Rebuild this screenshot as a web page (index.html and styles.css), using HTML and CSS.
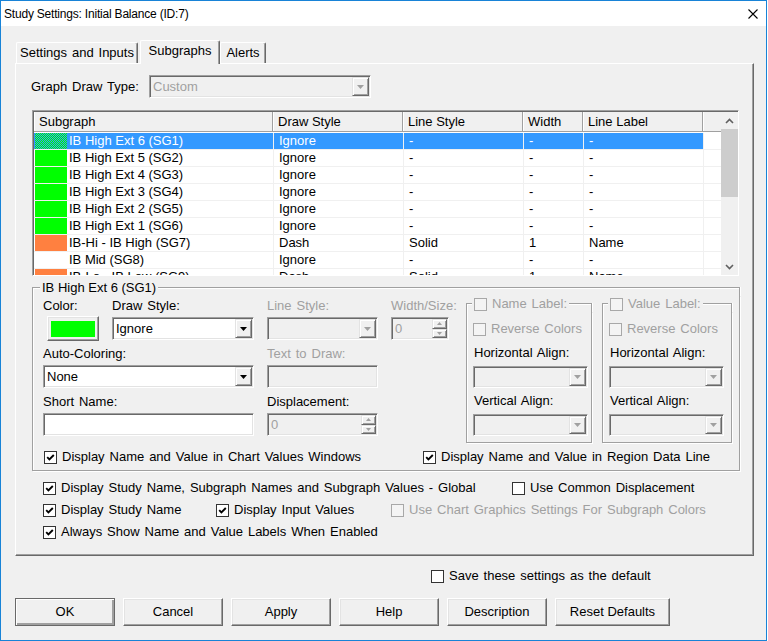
FILE: index.html
```html
<!DOCTYPE html>
<html>
<head>
<meta charset="utf-8">
<title>Study Settings</title>
<link rel="stylesheet" href="styles.css">
</head>
<body>
<div class="window">
  <div class="titlebar">
    <span class="title">Study Settings: Initial Balance (ID:7)</span>
    <svg class="close" width="10" height="10" viewBox="0 0 10 10"><path d="M0.5 0.5L9.5 9.5M9.5 0.5L0.5 9.5" stroke="#000" stroke-width="1.1" fill="none"/></svg>
  </div>

  <div class="tabs">
    <div class="tab t1">Settings and Inputs</div>
    <div class="tab t2 active">Subgraphs</div>
    <div class="tab t3">Alerts</div>
  </div>

  <div class="panel">
    <div class="gdt">
      <span class="gdt-label">Graph Draw Type:</span>
      <div class="field combo dis w222"><span class="val">Custom</span><span class="drop"><svg width="7" height="4" viewBox="0 0 7 4"><path d="M0 0h7L3.5 4z"/></svg></span></div>
    </div>

    <div class="list">
      <div class="lv">
        <div class="lv-head">
          <div class="hc">Subgraph</div>
          <div class="hc">Draw Style</div>
          <div class="hc">Line Style</div>
          <div class="hc">Width</div>
          <div class="hc">Line Label</div>
          <div class="hc hlast"></div>
        </div>
        <div class="lv-rows">
          <div class="row sel"><div class="c c1"><span class="sw dither"></span>IB High Ext 6 (SG1)</div><div class="c">Ignore</div><div class="c">-</div><div class="c">-</div><div class="c">-</div><div class="c e"></div></div>
          <div class="row"><div class="c c1"><span class="sw green"></span>IB High Ext 5 (SG2)</div><div class="c">Ignore</div><div class="c">-</div><div class="c">-</div><div class="c">-</div><div class="c e"></div></div>
          <div class="row"><div class="c c1"><span class="sw green"></span>IB High Ext 4 (SG3)</div><div class="c">Ignore</div><div class="c">-</div><div class="c">-</div><div class="c">-</div><div class="c e"></div></div>
          <div class="row"><div class="c c1"><span class="sw green"></span>IB High Ext 3 (SG4)</div><div class="c">Ignore</div><div class="c">-</div><div class="c">-</div><div class="c">-</div><div class="c e"></div></div>
          <div class="row"><div class="c c1"><span class="sw green"></span>IB High Ext 2 (SG5)</div><div class="c">Ignore</div><div class="c">-</div><div class="c">-</div><div class="c">-</div><div class="c e"></div></div>
          <div class="row"><div class="c c1"><span class="sw green"></span>IB High Ext 1 (SG6)</div><div class="c">Ignore</div><div class="c">-</div><div class="c">-</div><div class="c">-</div><div class="c e"></div></div>
          <div class="row"><div class="c c1"><span class="sw orange"></span>IB-Hi - IB High (SG7)</div><div class="c">Dash</div><div class="c">Solid</div><div class="c">1</div><div class="c">Name</div><div class="c e"></div></div>
          <div class="row"><div class="c c1"><span class="sw none"></span>IB Mid (SG8)</div><div class="c">Ignore</div><div class="c">-</div><div class="c">-</div><div class="c">-</div><div class="c e"></div></div>
          <div class="row"><div class="c c1"><span class="sw orange"></span>IB-Lo - IB Low (SG9)</div><div class="c">Dash</div><div class="c">Solid</div><div class="c">1</div><div class="c">Name</div><div class="c e"></div></div>
        </div>
      </div>
      <div class="vscroll">
        <div class="sb-btn"><svg width="9" height="6" viewBox="0 0 9 6"><path d="M1 5L4.5 1.5L8 5" stroke="#606060" stroke-width="1.6" fill="none"/></svg></div>
        <div class="sb-thumb"></div>
        <div class="sb-track"></div>
        <div class="sb-btn"><svg width="9" height="6" viewBox="0 0 9 6"><path d="M1 1L4.5 4.5L8 1" stroke="#606060" stroke-width="1.6" fill="none"/></svg></div>
      </div>
    </div>

    <div class="gb main-gb">
      <div class="gb-head"><span class="gb-title">IB High Ext 6 (SG1)</span></div>
      <div class="gb-body main-body">
        <div class="sub-top">
          <div class="fields">
            <span class="lbl g-a1">Color:</span>
            <div class="colorbtn g-a2"><span class="colorsw"></span></div>

            <span class="lbl g-b1">Draw Style:</span>
            <div class="field combo ctl g-b2 w142"><span class="val">Ignore</span><span class="drop"><svg width="7" height="4" viewBox="0 0 7 4"><path d="M0 0h7L3.5 4z"/></svg></span></div>

            <span class="lbl dis-t g-c1">Line Style:</span>
            <div class="field combo dis ctl g-c2 w111"><span class="val"></span><span class="drop"><svg width="7" height="4" viewBox="0 0 7 4"><path d="M0 0h7L3.5 4z"/></svg></span></div>

            <span class="lbl dis-t g-d1">Width/Size:</span>
            <div class="field spin dis ctl g-d2 w58"><span class="val">0</span><span class="spbtns"><span class="spb"><svg width="5" height="3" viewBox="0 0 5 3"><path d="M0 3h5L2.5 0z"/></svg></span><span class="spb"><svg width="5" height="3" viewBox="0 0 5 3"><path d="M0 0h5L2.5 3z"/></svg></span></span></div>

            <span class="lbl g-ab3">Auto-Coloring:</span>
            <div class="field combo ctl g-ab4 w211"><span class="val">None</span><span class="drop"><svg width="7" height="4" viewBox="0 0 7 4"><path d="M0 0h7L3.5 4z"/></svg></span></div>

            <span class="lbl dis-t g-c3">Text to Draw:</span>
            <div class="field dis ctl g-c4 w111"></div>

            <span class="lbl g-ab5">Short Name:</span>
            <div class="field ctl g-ab6 w211"></div>

            <span class="lbl g-c5">Displacement:</span>
            <div class="field spin dis ctl g-c6 w111"><span class="val">0</span><span class="spbtns"><span class="spb"><svg width="5" height="3" viewBox="0 0 5 3"><path d="M0 3h5L2.5 0z"/></svg></span><span class="spb"><svg width="5" height="3" viewBox="0 0 5 3"><path d="M0 0h5L2.5 3z"/></svg></span></span></div>
          </div>

          <div class="gb sub name-box">
            <div class="gb-head sub-head"><span class="gb-title dis-t"><span class="cb dis"></span>Name Label:</span></div>
            <div class="gb-body sub-body">
              <div class="cbrow dis-t"><span class="cb dis"></span>Reverse Colors</div>
              <div class="sublbl">Horizontal Align:</div>
              <div class="field combo dis w115 subctl"><span class="val"></span><span class="drop"><svg width="7" height="4" viewBox="0 0 7 4"><path d="M0 0h7L3.5 4z"/></svg></span></div>
              <div class="sublbl">Vertical Align:</div>
              <div class="field combo dis w115 subctl"><span class="val"></span><span class="drop"><svg width="7" height="4" viewBox="0 0 7 4"><path d="M0 0h7L3.5 4z"/></svg></span></div>
            </div>
          </div>

          <div class="gb sub value-box">
            <div class="gb-head sub-head"><span class="gb-title dis-t"><span class="cb dis"></span>Value Label:</span></div>
            <div class="gb-body sub-body">
              <div class="cbrow dis-t"><span class="cb dis"></span>Reverse Colors</div>
              <div class="sublbl">Horizontal Align:</div>
              <div class="field combo dis w115 subctl"><span class="val"></span><span class="drop"><svg width="7" height="4" viewBox="0 0 7 4"><path d="M0 0h7L3.5 4z"/></svg></span></div>
              <div class="sublbl">Vertical Align:</div>
              <div class="field combo dis w115 subctl"><span class="val"></span><span class="drop"><svg width="7" height="4" viewBox="0 0 7 4"><path d="M0 0h7L3.5 4z"/></svg></span></div>
            </div>
          </div>
        </div>

        <div class="gb-checks">
          <div class="cbrow w379"><span class="cb"><svg width="11" height="11" viewBox="0 0 11 11"><path d="M2.2 5.2L4.4 7.4L8.8 3" stroke="#000" stroke-width="1.9" fill="none"/></svg></span>Display Name and Value in Chart Values Windows</div>
          <div class="cbrow"><span class="cb"><svg width="11" height="11" viewBox="0 0 11 11"><path d="M2.2 5.2L4.4 7.4L8.8 3" stroke="#000" stroke-width="1.9" fill="none"/></svg></span>Display Name and Value in Region Data Line</div>
        </div>
      </div>
    </div>

    <div class="pchecks">
      <div class="prow">
        <div class="cbrow w469"><span class="cb"><svg width="11" height="11" viewBox="0 0 11 11"><path d="M2.2 5.2L4.4 7.4L8.8 3" stroke="#000" stroke-width="1.9" fill="none"/></svg></span>Display Study Name, Subgraph Names and Subgraph Values - Global</div>
        <div class="cbrow"><span class="cb"></span>Use Common Displacement</div>
      </div>
      <div class="prow">
        <div class="cbrow w173"><span class="cb"><svg width="11" height="11" viewBox="0 0 11 11"><path d="M2.2 5.2L4.4 7.4L8.8 3" stroke="#000" stroke-width="1.9" fill="none"/></svg></span>Display Study Name</div>
        <div class="cbrow w175"><span class="cb"><svg width="11" height="11" viewBox="0 0 11 11"><path d="M2.2 5.2L4.4 7.4L8.8 3" stroke="#000" stroke-width="1.9" fill="none"/></svg></span>Display Input Values</div>
        <div class="cbrow dis-t"><span class="cb dis"></span>Use Chart Graphics Settings For Subgraph Colors</div>
      </div>
      <div class="prow">
        <div class="cbrow"><span class="cb"><svg width="11" height="11" viewBox="0 0 11 11"><path d="M2.2 5.2L4.4 7.4L8.8 3" stroke="#000" stroke-width="1.9" fill="none"/></svg></span>Always Show Name and Value Labels When Enabled</div>
      </div>
    </div>
  </div>

  <div class="saverow">
    <div class="cbrow"><span class="cb"></span>Save these settings as the default</div>
  </div>

  <div class="buttons">
    <button class="btn default">OK</button>
    <button class="btn">Cancel</button>
    <button class="btn">Apply</button>
    <button class="btn">Help</button>
    <button class="btn">Description</button>
    <button class="btn wide">Reset Defaults</button>
  </div>
</div>
</body>
</html>
```

FILE: styles.css
```css
* { box-sizing: border-box; }
html, body { margin: 0; padding: 0; background: #fff; }
body {
  font: 13px/16px "Liberation Sans", Arial, sans-serif;
  color: #000;
  word-spacing: 1.3px;
}

.window {
  width: 767px;
  height: 641px;
  border: 1px solid #1883d7;
  background: #f0f0f0;
  display: flex;
  flex-direction: column;
  overflow: hidden;
}

/* title bar */
.titlebar {
  flex: none;
  height: 25px;
  background: #fff;
  display: flex;
  align-items: center;
  justify-content: space-between;
  padding: 0 8px 0 3px;
}
.title { font-size: 12px; letter-spacing: -0.2px; word-spacing: 0; }
.close { display: block; }

/* tabs */
.tabs {
  flex: none;
  display: flex;
  align-items: flex-end;
  height: 23px;
  margin: 14px 0 0 15px;
}
.tab {
  height: 21px;
  line-height: 19px;
  text-align: center;
  background: #f0f0f0;
  border-top: 1px solid #fff;
  border-left: 1px solid #fff;
  border-right: 1px solid #696969;
  box-shadow: inset -1px 0 #a0a0a0;
  border-radius: 2px 2px 0 0;
  white-space: nowrap;
}
.t1 { width: 122px; }
.t2 { width: 80px; margin-left: 2px; }
.t3 { width: 46px; }
.tab.active {
  height: 24px;
  margin-bottom: -1px;
  position: relative;
  z-index: 1;
  line-height: 20px;
}

/* panel */
.panel {
  flex: none;
  width: 739px;
  height: 493px;
  margin-left: 14px;
  border: 1px solid;
  border-color: #fff #696969 #696969 #fff;
  box-shadow: inset -1px -1px #a0a0a0;
}

.gdt {
  display: flex;
  align-items: center;
  height: 23px;
  margin: 11px 0 0 15px;
}
.gdt-label { width: 118px; }

/* generic sunken field */
.field {
  height: 23px;
  border: 1px solid;
  border-color: #a0a0a0 #fff #fff #a0a0a0;
  box-shadow: inset 1px 1px #696969, inset -1px -1px #e3e3e3;
  background: #fff;
  display: flex;
  align-items: stretch;
  padding: 1px;
}
.field.dis { background: #f0f0f0; color: #a0a0a0; }
.field .val {
  flex: 1;
  padding-left: 2px;
  line-height: 19px;
  white-space: nowrap;
  overflow: hidden;
}
.drop {
  width: 17px;
  flex: none;
  display: flex;
  align-items: center;
  justify-content: center;
  background: #f0f0f0;
  border: 1px solid;
  border-color: #e3e3e3 #696969 #696969 #e3e3e3;
  box-shadow: inset 1px 1px #fff, inset -1px -1px #a0a0a0;
  fill: #000;
}
.field.dis .drop { fill: #a0a0a0; }
.spbtns {
  width: 15px;
  flex: none;
  display: flex;
  flex-direction: column;
}
.spb {
  flex: 1;
  display: flex;
  align-items: center;
  justify-content: center;
  background: #f0f0f0;
  border: 1px solid;
  border-color: #e3e3e3 #696969 #696969 #e3e3e3;
  box-shadow: inset 1px 1px #fff, inset -1px -1px #a0a0a0;
  fill: #a0a0a0;
}
.spb svg { display: block; }

.w222 { width: 222px; }
.w211 { width: 211px; }
.w142 { width: 142px; }
.w115 { width: 115px; }
.w111 { width: 111px; }
.w58 { width: 58px; }

/* list view */
.list {
  display: flex;
  width: 707px;
  height: 166px;
  margin: 12px 0 0 16px;
  border: 1px solid;
  border-color: #a0a0a0 #fff #fff #a0a0a0;
  box-shadow: inset 1px 1px #696969;
  padding: 1px 0 0 1px;
  background: #fff;
}
.lv {
  width: 687px;
  display: flex;
  flex-direction: column;
  overflow: hidden;
  word-spacing: 0;
}
.lv-head, .row {
  display: grid;
  grid-template-columns: 239px 130px 120px 60px 120px 18px;
}
.lv-head {
  height: 20px;
  flex: none;
  background: #f0f0f0;
  border-bottom: 1px solid #a0a0a0;
}
.hc {
  padding-left: 5px;
  line-height: 19px;
  border-right: 1px solid #a0a0a0;
  box-shadow: inset 1px 0 #fff;
  white-space: nowrap;
}
.hc.hlast { border-right: 0; }
.lv-rows {
  flex: 1;
  overflow: hidden;
  padding-top: 1px;
}
.row {
  height: 17px;
  border-bottom: 1px solid #f0f0f0;
}
.c {
  border-left: 1px solid #f0f0f0;
  padding-left: 5px;
  line-height: 16px;
  white-space: nowrap;
  overflow: hidden;
}
.c1 {
  border-left: 0;
  padding-left: 1px;
  display: flex;
  align-items: center;
}
.row.sel .c { background: #3399ff; color: #fff; }
.row.sel .c.e { background: #fff; }
.sw {
  width: 32px;
  height: 16px;
  flex: none;
  margin-right: 2px;
}
.sw.green { background: #00ff00; }
.sw.orange { background: #ff8040; }
.sw.none { background: transparent; }
.sw.dither {
  background: repeating-conic-gradient(#00ff00 0 25%, #3399ff 0 50%) 0 0 / 2px 2px;
}

.vscroll {
  width: 17px;
  display: flex;
  flex-direction: column;
  background: #f0f0f0;
}
.sb-btn {
  height: 17px;
  flex: none;
  display: flex;
  align-items: center;
  justify-content: center;
}
.sb-thumb { height: 68px; flex: none; background: #cdcdcd; }
.sb-track { flex: 1; }

/* group boxes */
.gb { display: flex; flex-direction: column; }
.gb-head {
  display: flex;
  height: 16px;
  line-height: 16px;
  flex: none;
}
.gb-head::before {
  content: "";
  width: 7px;
  height: 8px;
  align-self: flex-end;
  border-top: 1px solid #a0a0a0;
  border-left: 1px solid #a0a0a0;
  box-shadow: inset 1px 1px #fff;
}
.gb-head::after {
  content: "";
  flex: 1;
  height: 8px;
  align-self: flex-end;
  border-top: 1px solid #a0a0a0;
  border-right: 1px solid #a0a0a0;
  box-shadow: inset 0 1px #fff, 1px 0 #fff;
}
.gb-title {
  padding: 0 2px;
  white-space: nowrap;
  display: flex;
  align-items: center;
  gap: 5px;
}
.main-gb > .gb-head .gb-title { word-spacing: 0; }
.sub-head::before { width: 5px; }
.gb-body {
  border: 1px solid #a0a0a0;
  border-top: 0;
  box-shadow: inset 1px 0 #fff, 1px 1px #fff;
}

.main-gb { width: 708px; margin: 4px 0 0 16px; }
.main-body { padding: 0 0 5px 10px; }
.sub-top { display: flex; height: 147px; }

.fields {
  width: 423px;
  margin-top: 2px;
  display: grid;
  grid-template-columns: 69px 155px 124px 75px;
  grid-template-rows: 15px 33px 15px 33px 15px 27px;
  align-items: start;
}
.lbl { line-height: 15px; white-space: nowrap; }
.dis-t { color: #a0a0a0; }
.ctl { margin-top: 4px; }
.g-a1 { grid-column: 1; grid-row: 1; }
.g-a2 { grid-column: 1; grid-row: 2; }
.g-b1 { grid-column: 2; grid-row: 1; }
.g-b2 { grid-column: 2; grid-row: 2; }
.g-c1 { grid-column: 3; grid-row: 1; }
.g-c2 { grid-column: 3; grid-row: 2; }
.g-d1 { grid-column: 4; grid-row: 1; }
.g-d2 { grid-column: 4; grid-row: 2; }
.g-ab3 { grid-column: 1 / 3; grid-row: 3; }
.g-ab4 { grid-column: 1 / 3; grid-row: 4; }
.g-c3 { grid-column: 3; grid-row: 3; }
.g-c4 { grid-column: 3; grid-row: 4; }
.g-ab5 { grid-column: 1 / 3; grid-row: 5; }
.g-ab6 { grid-column: 1 / 3; grid-row: 6; }
.g-c5 { grid-column: 3; grid-row: 5; }
.g-c6 { grid-column: 3; grid-row: 6; }

.colorbtn {
  width: 52px;
  height: 25px;
  margin: 3px 0 0 4px;
  border: 1px solid;
  border-color: #fff #696969 #696969 #fff;
  box-shadow: inset -1px -1px #a0a0a0, inset 1px 1px #e3e3e3;
  display: flex;
  align-items: center;
  justify-content: center;
}
.colorsw { width: 44px; height: 16px; background: #00ff00; }

.name-box { width: 126px; }
.value-box { width: 130px; margin-left: 10px; }
.sub-body { flex: 1; padding: 9px 0 6px 6px; }
.sublbl { margin-top: 8px; padding-left: 1px; line-height: 16px; white-space: nowrap; }
.sublbl + .subctl { margin-top: 5px; }
.subctl + .sublbl { margin-top: 5px; }
.sub-body .field { height: 22px; }

/* checkboxes */
.cbrow {
  display: flex;
  align-items: center;
  height: 16px;
  gap: 5px;
  white-space: nowrap;
}
.cb {
  width: 13px;
  height: 13px;
  flex: none;
  border: 1px solid #333;
  background: #fff;
  display: flex;
  align-items: center;
  justify-content: center;
}
.cb svg { display: block; }
.cb.dis { border-color: #a8a8a8; background: #f4f4f4; }

.gb-checks { display: flex; margin: 6px 0 0 1px; }
.w379 { width: 379px; }
.w469 { width: 469px; }
.w173 { width: 173px; }
.w175 { width: 175px; }

.pchecks { margin: 6px 0 0 27px; }
.prow { display: flex; align-items: center; height: 22px; }

/* bottom */
.saverow { flex: none; margin: 12px 0 0 430px; }
.buttons {
  flex: none;
  display: flex;
  gap: 8px;
  margin: 14px 0 0 14px;
}
.btn {
  width: 100px;
  height: 28px;
  padding: 0;
  font: 13px/16px "Liberation Sans", Arial, sans-serif;
  color: #000;
  background: #f0f0f0;
  border: 1px solid;
  border-color: #fff #696969 #696969 #fff;
  box-shadow: inset -1px -1px #a0a0a0, inset 1px 1px #e3e3e3;
  text-align: center;
}
.btn.default {
  border-color: #696969;
  box-shadow: inset 1px 1px #fff, inset -2px -2px #a0a0a0;
}
.btn.wide { width: 115px; }
```
